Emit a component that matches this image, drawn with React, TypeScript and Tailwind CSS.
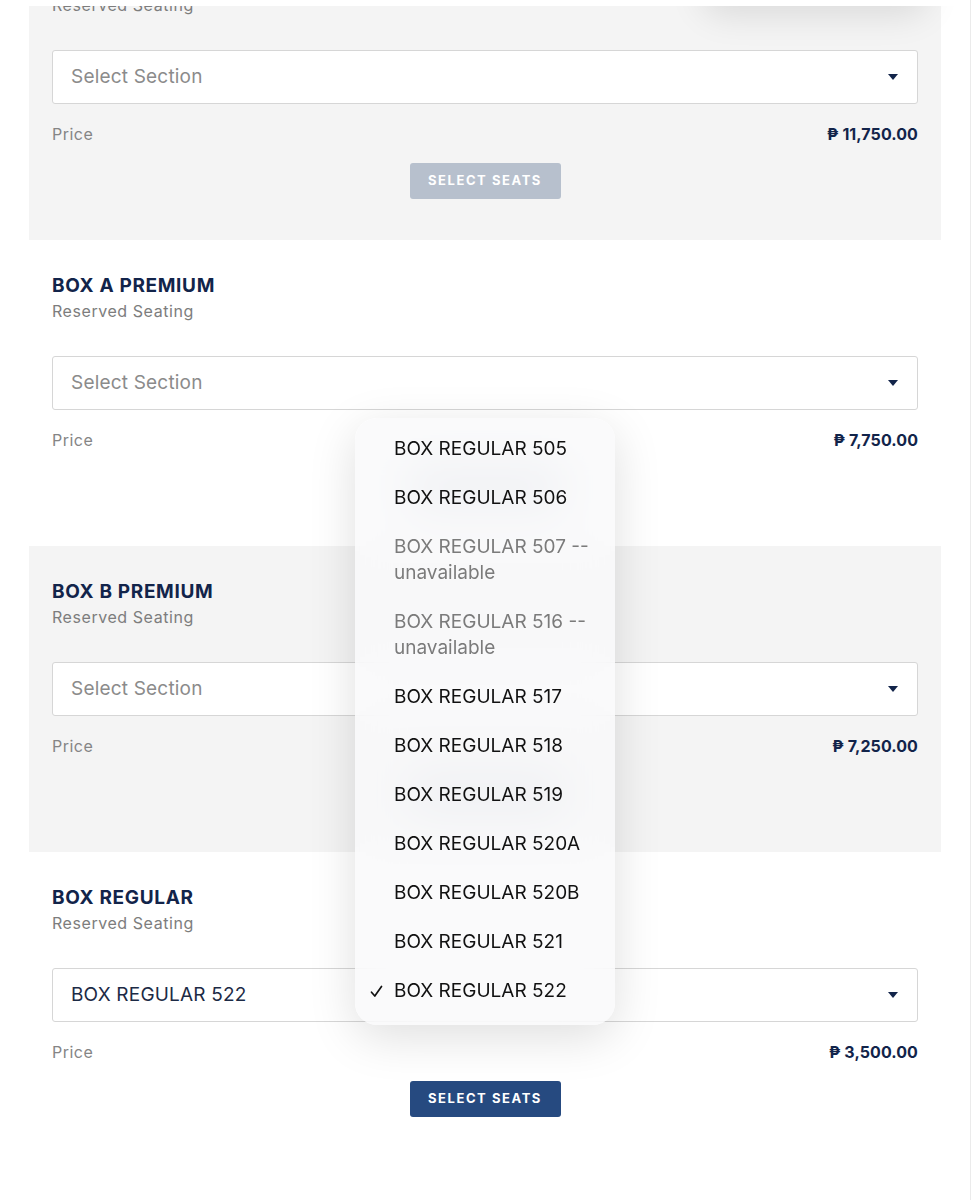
import React from "react";

type Tier = {
  name: string;
  price: string;
  selected?: string;
};

const tiers: Tier[] = [
  { name: "BOX VIP", price: "11,750.00" },
  { name: "BOX A PREMIUM", price: "7,750.00" },
  { name: "BOX B PREMIUM", price: "7,250.00" },
  { name: "BOX REGULAR", price: "3,500.00", selected: "BOX REGULAR 522" },
];

const options = [
  { label: "BOX REGULAR 505" },
  { label: "BOX REGULAR 506" },
  { label: "BOX REGULAR 507 -- unavailable", disabled: true },
  { label: "BOX REGULAR 516 -- unavailable", disabled: true },
  { label: "BOX REGULAR 517" },
  { label: "BOX REGULAR 518" },
  { label: "BOX REGULAR 519" },
  { label: "BOX REGULAR 520A" },
  { label: "BOX REGULAR 520B" },
  { label: "BOX REGULAR 521" },
  { label: "BOX REGULAR 522", checked: true },
];

const Caret = () => (
  <svg width="10" height="6" viewBox="0 0 10 6" className="shrink-0">
    <polygon points="0,0 10,0 5,6" fill="#12244a" />
  </svg>
);

const TierCard = ({ tier, shaded }: { tier: Tier; shaded: boolean }) => (
  <section
    className={`h-[306px] px-[23px] pt-[34px] ${
      shaded ? "bg-[#f4f4f4]" : "bg-white"
    }`}
  >
    <h3 className="text-[19px] font-bold leading-6 tracking-[0.035em] text-[#12244a]">
      {tier.name}
    </h3>
    <p className="mt-px text-[16px] leading-6 tracking-[0.035em] text-[#7d7d7d]">
      Reserved Seating
    </p>

    <div className="mt-[33px] flex h-[54px] items-center justify-between rounded-[3px] border border-[#d6d6d6] bg-white pl-[18px] pr-[19px]">
      {tier.selected ? (
        <span className="text-[19px] tracking-[0.01em] text-[#1c2a45]">
          {tier.selected}
        </span>
      ) : (
        <span className="text-[19px] tracking-[0.01em] text-[#8b8b8b]">
          Select Section
        </span>
      )}
      <Caret />
    </div>

    <div className="mt-[18px] flex items-center justify-between text-[16px] leading-6">
      <span className="tracking-[0.03em] text-[#858585]">Price</span>
      <span className="font-bold tracking-[0.005em] text-[#12244a]">
        ₱ {tier.price}
      </span>
    </div>

    <div className="mt-[17px] flex justify-center">
      <button
        className={`h-[36px] w-[151px] rounded-[3px] text-[13px] font-bold tracking-[0.12em] text-white ${
          tier.selected ? "bg-[#264a80]" : "bg-[#b7c0cd]"
        }`}
      >
        SELECT SEATS
      </button>
    </div>
  </section>
);

const SectionMenu = () => (
  <div className="absolute left-[355px] top-[418px] z-30 w-[260px] rounded-[22px] bg-[#f9f9fa]/80 pb-[10px] pt-[6px] shadow-[0_12px_48px_rgba(0,0,0,0.13)] backdrop-blur-xl">
    {options.map((opt) => (
      <div
        key={opt.label}
        className={`relative py-[12px] pl-[39px] pr-[20px] text-[19px] ${
          opt.disabled ? "leading-[25.5px] text-[#7b7b7b]" : "leading-[25px] text-[#111111]"
        }`}
      >
        {opt.checked && (
          <svg
            width="13"
            height="13"
            viewBox="0 0 13 13"
            className="absolute left-[15px] top-[19px]"
          >
            <path
              d="M1.5 7.2 L4.8 11 L11.5 1.5"
              fill="none"
              stroke="#111"
              strokeWidth="1.7"
              strokeLinecap="round"
              strokeLinejoin="round"
            />
          </svg>
        )}
        {opt.label}
      </div>
    ))}
  </div>
);

export default function App() {
  return (
    <div className="relative h-[1200px] overflow-hidden border-r border-[#ebebeb] bg-white font-['Inter',sans-serif]">
      {/* sticky header, scrolled almost out of view */}
      <div className="absolute inset-x-0 top-0 z-20 h-[6px] bg-white" />
      <div className="absolute right-[40px] top-[-44px] z-10 h-[50px] w-[230px] rounded-full bg-white shadow-[0_10px_34px_rgba(0,0,0,0.10)]" />

      <div className="-mt-[66px] px-[29px]">
        {tiers.map((tier, i) => (
          <TierCard key={tier.name} tier={tier} shaded={i % 2 === 0} />
        ))}
      </div>

      <SectionMenu />
    </div>
  );
}
